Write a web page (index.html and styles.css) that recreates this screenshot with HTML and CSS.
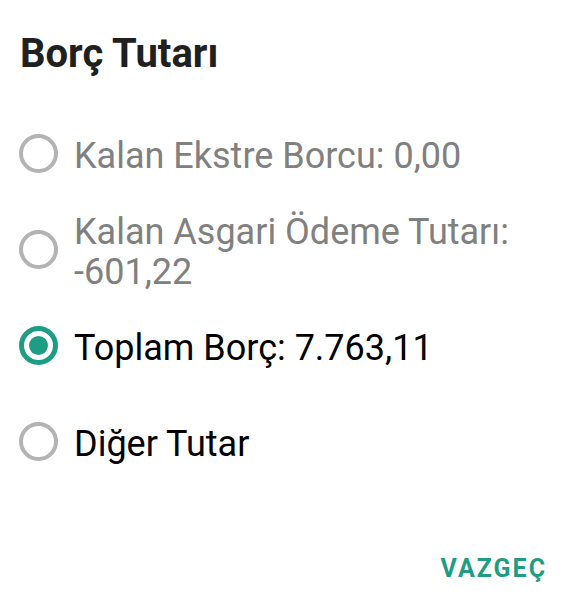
FILE: index.html
```html
<!DOCTYPE html>
<html lang="tr">
<head>
<meta charset="utf-8">
<title>Borç Tutarı</title>
<link rel="stylesheet" href="styles.css">
</head>
<body>
<div class="dialog">
  <h1 class="title">Borç Tutarı</h1>
  <div class="options">
    <div class="option disabled">
      <span class="radio"></span>
      <span class="label">Kalan Ekstre Borcu: 0,00</span>
    </div>
    <div class="option disabled">
      <span class="radio"></span>
      <span class="label">Kalan Asgari Ödeme Tutarı: -601,22</span>
    </div>
    <div class="option">
      <span class="radio checked"></span>
      <span class="label">Toplam Borç: 7.763,11</span>
    </div>
    <div class="option">
      <span class="radio"></span>
      <span class="label">Diğer Tutar</span>
    </div>
  </div>
  <div class="actions">
    <span class="btn">VAZGEÇ</span>
  </div>
</div>
</body>
</html>
```

FILE: styles.css
```css
html, body {
  margin: 0;
  padding: 0;
  background: #ffffff;
}
body {
  font-family: Roboto, "Liberation Sans", sans-serif;
  width: 586px;
  height: 600px;
  overflow: hidden;
}
.dialog {
  padding-top: 31px;
}
.title {
  margin: 0;
  padding-left: 20px;
  font-size: 40px;
  line-height: 46px;
  font-weight: 700;
  color: #202020;
}
.options {
  margin-top: 31px;
  padding-left: 19px;
  padding-right: 40px;
}
.option {
  display: flex;
  align-items: center;
  min-height: 96px;
}
.radio {
  flex: none;
  box-sizing: border-box;
  width: 39px;
  height: 39px;
  border-radius: 50%;
  border: 4.5px solid #b3b3b3;
  margin-right: 16px;
  margin-bottom: 6px;
  display: flex;
  align-items: center;
  justify-content: center;
}
.radio.checked {
  border: 5px solid #1f9d84;
}
.radio.checked::after {
  content: "";
  width: 19px;
  height: 19px;
  border-radius: 50%;
  background: #1f9d84;
}
.label {
  font-size: 36px;
  line-height: 40px;
  color: #000000;
}
.option.disabled .label {
  color: #808080;
}
.actions {
  display: flex;
  justify-content: flex-end;
  margin-top: 62px;
  padding-right: 39px;
}
.btn {
  font-size: 25px;
  line-height: 30px;
  font-weight: 700;
  letter-spacing: 2px;
  color: #1f9d84;
}
```
